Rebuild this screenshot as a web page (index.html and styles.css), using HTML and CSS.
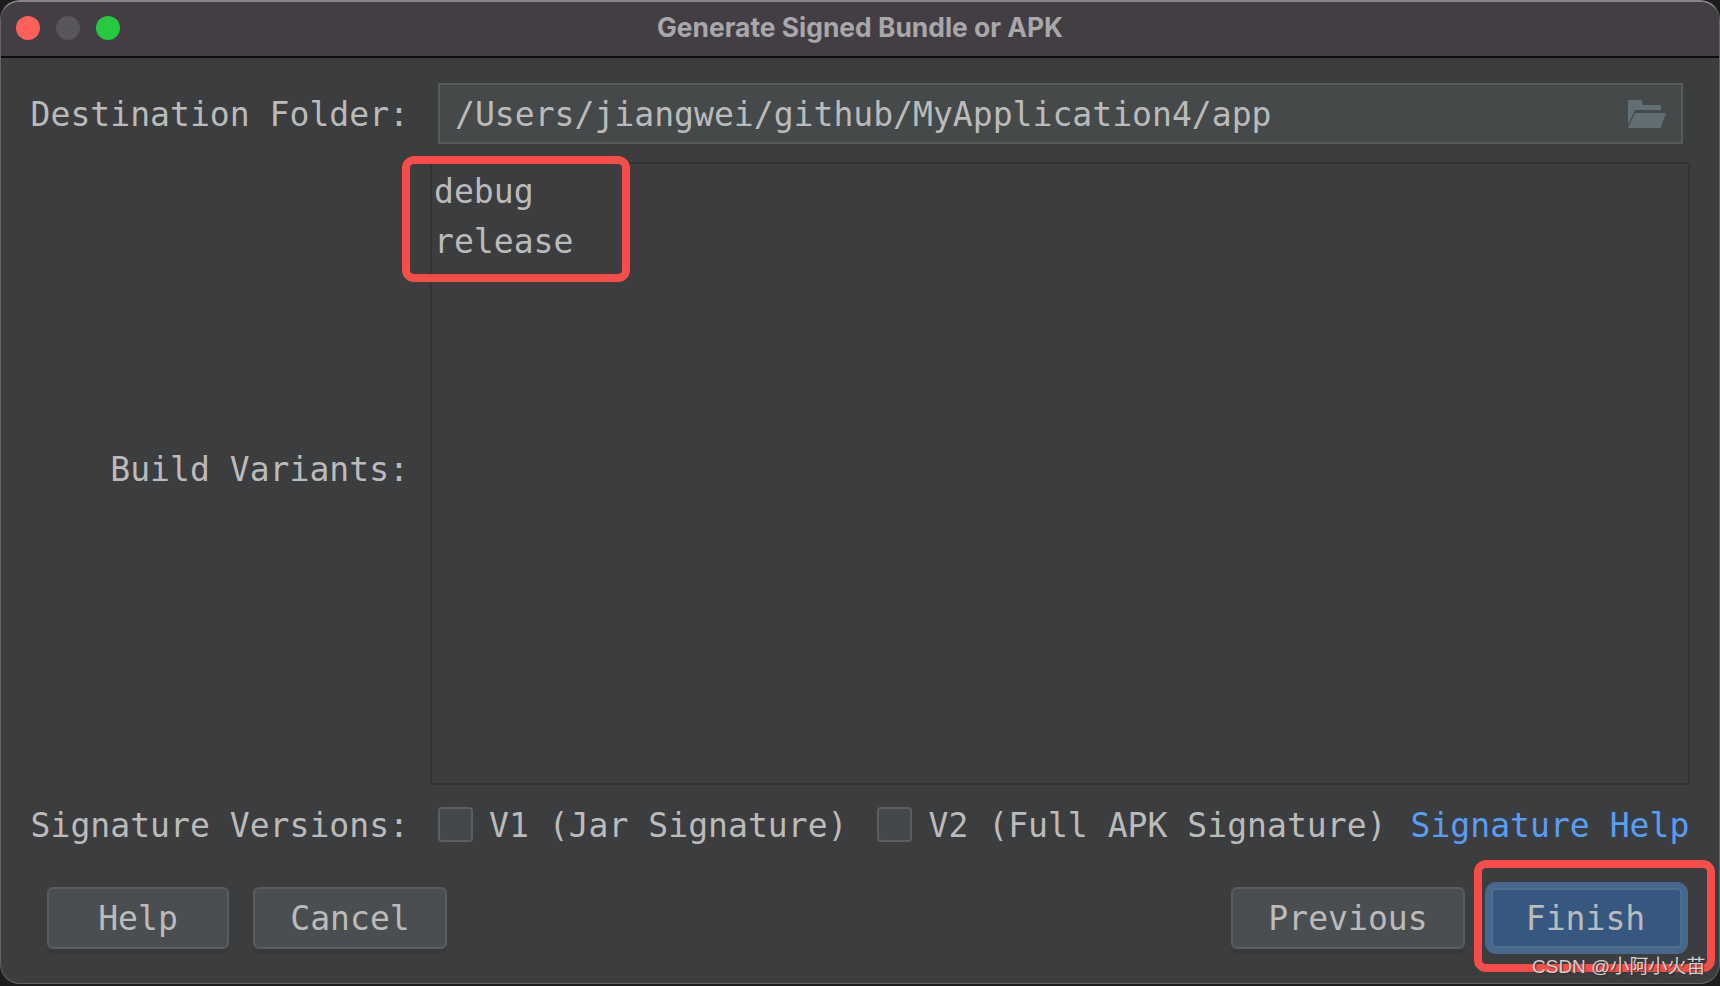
FILE: index.html
```html
<!DOCTYPE html>
<html lang="en">
<head>
<meta charset="utf-8">
<title>Generate Signed Bundle or APK</title>
<link rel="stylesheet" href="styles.css">
</head>
<body>
<div class="window">
  <header class="titlebar">
    <div class="lights">
      <span class="light red"></span>
      <span class="light gray"></span>
      <span class="light green"></span>
    </div>
    <div class="title">Generate Signed Bundle or APK</div>
  </header>
  <main class="content">
    <div class="form">
      <label class="label label-destination">Destination Folder:</label>
      <div class="path">
        <span>/Users/jiangwei/github/MyApplication4/app</span>
        <svg class="folder" width="38" height="28" viewBox="0 0 38 28"><path d="M0 0H13.5L15 5H33V10H7L0 25Z"/><path d="M7 13H38L32.5 28H0Z"/></svg>
      </div>
      <label class="label label-variants">Build Variants:</label>
      <ul class="list">
        <li>debug</li>
        <li>release</li>
      </ul>
      <label class="label label-signature">Signature Versions:</label>
      <div class="signatures">
        <span class="check"></span>
        <span class="check-text v1">V1 (Jar Signature)</span>
        <span class="check"></span>
        <span class="check-text">V2 (Full APK Signature)</span>
        <a class="link">Signature Help</a>
      </div>
    </div>
    <div class="buttons">
      <button class="btn help">Help</button>
      <button class="btn cancel">Cancel</button>
      <span class="spacer"></span>
      <button class="btn previous">Previous</button>
      <button class="btn finish">Finish</button>
    </div>
  </main>
  <div class="mark mark-variants"></div>
  <div class="mark mark-finish"></div>
  <div class="watermark">CSDN @小阿小火苗</div>
</div>
</body>
</html>
```
FILE: styles.css
```css
* { box-sizing: border-box; }
html, body { margin: 0; height: 100%; background: #1d1d1e; overflow: hidden; }
body { font-family: "DejaVu Sans Mono", "Liberation Mono", monospace; font-size: 33.1px; color: #bbbbbb; }

.window {
  position: relative;
  width: 1720px;
  height: 984px;
  background: #3c3d3f;
  border-radius: 20px;
  border: 1px solid #626365;
  border-top: 2px solid #858487;
  overflow: hidden;
}

.titlebar {
  position: relative;
  height: 58px;
  margin-top: -2px;
  background: #433e44;
  border-top: 2px solid #858487;
  border-bottom: 2px solid #0c0c0c;
  display: flex;
  align-items: center;
  justify-content: center;
}
.lights { position: absolute; left: 15px; top: 14px; display: flex; gap: 16px; }
.light { width: 24px; height: 24px; border-radius: 50%; }
.red { background: #fe5f57; }
.gray { background: #58565b; }
.green { background: #27c93f; }
.title { font-family: Inter, "Liberation Sans", sans-serif; font-weight: 700; font-size: 26.4px; color: #a8a7a9; margin-top: -4px; }

.content { padding: 25px 30px 0 29px; }
.form { display: grid; grid-template-columns: 379px minmax(0, 1fr); column-gap: 22px; row-gap: 19px; align-items: center; }
.label { text-align: right; white-space: pre; line-height: 40px; }
.label-destination { line-height: 38px; padding-top: 2px; }
.label-variants { padding-bottom: 9px; }
.label-signature { line-height: 36px; padding-top: 4px; }

.path {
  margin: 0 6px 0 7px;
  height: 61px;
  padding: 1px 15px 0 15px;
  background: #45494a;
  border: 2px solid #585a5c;
  display: flex;
  align-items: center;
  justify-content: space-between;
}
.folder { fill: #616e74; }

.list {
  list-style: none;
  margin: -1px -1px 0 -1px;
  height: 623px;
  padding: 3px 0 0 2px;
  border: 2px solid #323335;
}
.list li { height: 50px; line-height: 50px; }

.signatures { display: flex; align-items: center; margin-left: 7px; white-space: pre; }
.check {
  width: 35px; height: 35px;
  background: #43494a;
  border: 2px solid #5c5e60;
  border-radius: 4px;
  flex: none;
}
.check-text, .link { line-height: 37px; padding-top: 2px; }
.check-text { margin-left: 16px; }
.check-text.v1 { margin-right: 30px; }
.link { margin-left: 24px; color: #589df6; }

.buttons { display: flex; align-items: flex-start; margin-top: 43px; padding-left: 17px; padding-right: 3px; }
.spacer { flex: 1; }
.btn {
  height: 62px;
  font: inherit;
  color: #bbbbbb;
  background: #4b4e50;
  border: 2px solid #5a5c5e;
  border-radius: 6px;
  box-shadow: 0 5px 0 #38393b;
  padding: 0;
}
.help { width: 182px; }
.cancel { width: 194px; margin-left: 24px; }
.previous { width: 234px; }
.finish {
  width: 191px;
  height: 60px;
  margin: 1px 4px 0 26px;
  padding-right: 2px;
  background: #365880;
  border: 2px solid #4c708c;
  box-shadow: 0 0 0 6px #46688f;
  border-radius: 5px;
}

.mark {
  position: absolute;
  border: 8px solid #f74c47;
  border-radius: 12px;
}
.mark-variants { left: 401px; top: 154px; width: 228px; height: 126px; }
.mark-finish { left: 1473px; top: 858px; width: 241px; height: 112px; }

.watermark {
  position: absolute;
  left: 1531px;
  top: 952px;
  font-family: "Liberation Sans", "Noto Sans CJK SC", sans-serif;
  font-size: 19px;
  line-height: 26px;
  color: #d0d0d0;
  text-shadow: 1px 1px 1px #333333;
  white-space: nowrap;
}
```
